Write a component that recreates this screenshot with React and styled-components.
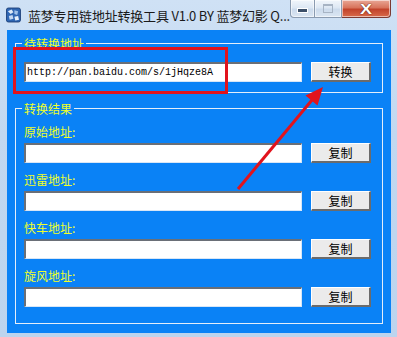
import React from "react";
import styled, { createGlobalStyle } from "styled-components";

const GlobalStyle = createGlobalStyle`
  html, body {
    margin: 0;
    padding: 0;
    background: #ffffff;
  }
  body {
    font-family: "Noto Sans CJK SC", "Liberation Sans", sans-serif;
  }
`;

const Window = styled.div`
  position: relative;
  width: 397px;
  height: 337px;
  box-sizing: border-box;
  display: flex;
  flex-direction: column;
  background: linear-gradient(180deg, #cfe1f5 0%, #c2d8f0 40%, #bcd4ee 100%);
  overflow: hidden;
`;

const TitleBar = styled.div`
  height: 30px;
  flex: 0 0 30px;
  display: flex;
  align-items: flex-start;
  padding-left: 6px;
  padding-right: 6px;
`;

const TitleLeft = styled.div`
  height: 30px;
  display: flex;
  align-items: center;
  gap: 7px;
  flex: 1;
  min-width: 0;
`;

const TitleText = styled.span`
  font-size: 13px;
  color: #1a1a1a;
  white-space: nowrap;
  letter-spacing: -0.2px;
`;

const CaptionGroup = styled.div`
  display: flex;
`;

const CaptionButton = styled.div`
  width: ${(p) => p.$w}px;
  height: 18px;
  box-sizing: border-box;
  display: flex;
  align-items: center;
  justify-content: center;
  border: 1px solid ${(p) => (p.$close ? "#7b3a33" : "#8a9bb0")};
  border-top: none;
  border-left-width: ${(p) => (p.$first ? 1 : 0)}px;
  border-radius: ${(p) =>
    p.$first ? "0 0 0 4px" : p.$close ? "0 0 4px 0" : "0"};
  background: ${(p) =>
    p.$close
      ? "linear-gradient(180deg, #e9a796 0%, #d8745c 45%, #c2432b 55%, #d86a4a 100%)"
      : "linear-gradient(180deg, #f1f6fb 0%, #dde8f4 45%, #ccdbec 55%, #dbe6f2 100%)"};
  box-shadow: inset 0 0 0 1px rgba(255, 255, 255, 0.55);
`;

const MinGlyph = styled.div`
  width: 9px;
  height: 3px;
  background: #3c4f68;
  border: 1px solid #ffffff;
  margin-top: 4px;
`;

const MaxGlyph = styled.div`
  width: 8px;
  height: 6px;
  border: 1px solid #a7b4c4;
  border-top-width: 2px;
`;

const CloseGlyph = styled.span`
  font-family: "Liberation Sans", sans-serif;
  font-weight: bold;
  font-size: 15px;
  line-height: 1;
  color: #ffffff;
  transform: scaleX(1.2);
  text-shadow: 0 0 1px #5a1a10, 0 0 1px #5a1a10;
`;

const Client = styled.div`
  position: relative;
  flex: 1;
  margin: 0 6px 4px 7px;
  background: #0a82f6;
  padding: 6px 8px 8px 8px;
  display: flex;
  flex-direction: column;
  gap: 8px;
`;

const Group = styled.fieldset`
  margin: 0;
  border: 1px solid #e4eefa;
  padding: ${(p) => (p.$rows ? "7px 10px 16px 8px" : "11px 10px 10px 8px")};
  min-width: 0;
`;

const Legend = styled.legend`
  font-size: 12px;
  line-height: 15px;
  color: #f0ff28;
  padding: 0 2px;
  margin-left: -2px;
`;

const FieldStack = styled.div`
  display: flex;
  flex-direction: column;
  gap: 8px;
`;

const Field = styled.div`
  display: flex;
  flex-direction: column;
  gap: 2px;
`;

const Label = styled.div`
  height: 18px;
  line-height: 18px;
  font-size: 12px;
  color: #f0ff28;
`;

const Row = styled.div`
  display: flex;
  align-items: center;
  gap: 9px;
`;

const TextBox = styled.div`
  width: 278px;
  height: 20px;
  box-sizing: border-box;
  background: #ffffff;
  border-top: 2px solid #6a6f77;
  border-left: 2px solid #6a6f77;
  border-bottom: 1px solid #d8e6f6;
  border-right: 1px solid #d8e6f6;
  padding-left: 1px;
  font-family: "Liberation Mono", monospace;
  font-size: 10px;
  line-height: 17px;
  color: #000000;
  white-space: nowrap;
  overflow: hidden;
`;

const Button = styled.div`
  width: 60px;
  height: 20px;
  box-sizing: border-box;
  background: #ebebeb;
  border-top: 1px solid #ffffff;
  border-left: 1px solid #ffffff;
  border-right: 2px solid #6b6b6b;
  border-bottom: 2px solid #6b6b6b;
  display: flex;
  align-items: center;
  justify-content: center;
  font-size: 12px;
  color: #000000;
`;

const RedBox = styled.div`
  position: absolute;
  left: 6px;
  top: 17px;
  width: 215px;
  height: 47px;
  box-sizing: border-box;
  border: 3px solid #e2131c;
  pointer-events: none;
`;

const Arrow = styled.svg`
  position: absolute;
  left: 0;
  top: 0;
  pointer-events: none;
`;

const AppIcon = () => (
  <svg width="16" height="16" viewBox="0 0 16 16">
    <rect x="0.5" y="0.5" width="15" height="15" rx="2" fill="#2f66b3" stroke="#1d3f78" />
    <path d="M2 4 L6 2 L8 5 L5 7 Z" fill="#dfeaf8" />
    <path d="M9 3 L13 4 L12 8 L9 7 Z" fill="#9fc1ea" />
    <path d="M3 9 L7 8 L8 12 L4 13 Z" fill="#c4d8f2" />
    <path d="M9 10 L13 9 L14 13 L10 14 Z" fill="#e8f0fb" />
  </svg>
);

const results = ["原始地址:", "迅雷地址:", "快车地址:", "旋风地址:"];

export default function App() {
  return (
    <>
      <GlobalStyle />
      <Window>
        <TitleBar>
          <TitleLeft>
            <AppIcon />
            <TitleText>蓝梦专用链地址转换工具 V1.0 BY 蓝梦幻影 Q...</TitleText>
          </TitleLeft>
          <CaptionGroup>
            <CaptionButton $w={25} $first>
              <MinGlyph />
            </CaptionButton>
            <CaptionButton $w={27}>
              <MaxGlyph />
            </CaptionButton>
            <CaptionButton $w={49} $close>
              <CloseGlyph>X</CloseGlyph>
            </CaptionButton>
          </CaptionGroup>
        </TitleBar>
        <Client>
          <Group>
            <Legend>待转换地址</Legend>
            <Row>
              <TextBox>http://pan.baidu.com/s/1jHqze8A</TextBox>
              <Button>转换</Button>
            </Row>
          </Group>
          <Group $rows>
            <Legend>转换结果</Legend>
            <FieldStack>
              {results.map((r) => (
                <Field key={r}>
                  <Label>{r}</Label>
                  <Row>
                    <TextBox />
                    <Button>复制</Button>
                  </Row>
                </Field>
              ))}
            </FieldStack>
          </Group>
          <RedBox />
        </Client>
        <Arrow width="397" height="337" viewBox="0 0 397 337">
          <line x1="238" y1="189" x2="312" y2="100" stroke="#e2131c" strokeWidth="3" />
          <polygon points="323,87 317.5,105.5 305.5,95.5" fill="#e2131c" />
        </Arrow>
      </Window>
    </>
  );
}
